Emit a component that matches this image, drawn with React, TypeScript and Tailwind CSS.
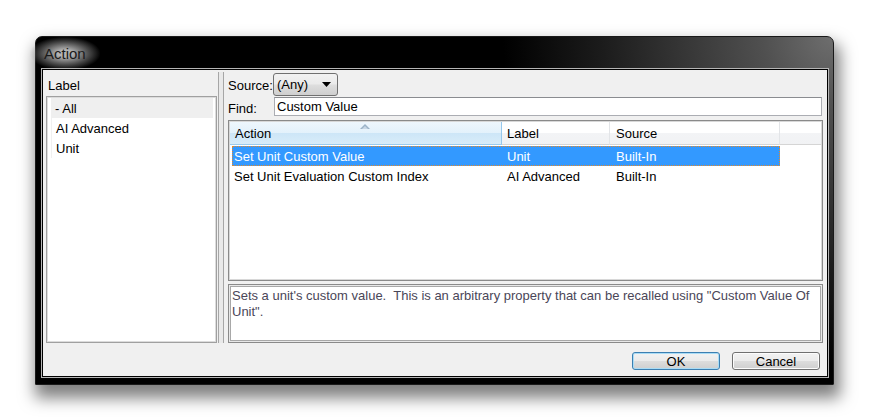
import React from "react";

const F = "font-['Liberation_Sans',Arial,sans-serif] text-[13px] leading-[15px]";

function SortArrow() {
  return (
    <svg className="absolute left-[130px] top-[2px]" width="10" height="5" viewBox="0 0 10 5">
      <polygon points="0,5 5,0 10,5" fill="#9bb3c8" />
      <polygon points="2,5 5,2 8,5" fill="#c9d8e6" />
    </svg>
  );
}

export default function App() {
  return (
    <div className={`w-[870px] h-[420px] bg-white pt-[36px] pl-[35px] ${F} text-black`}>
      <div className="w-[799px] h-[349px] flex flex-col rounded-t-[7px] border border-[#1a1a1a] bg-[radial-gradient(circle_at_100%_0%,#6e6e6e_0px,#505050_70px,#1c1c1c_230px,#000_330px)] shadow-[3px_10px_16px_3px_rgba(0,0,0,0.5)]">
        {/* title bar */}
        <div className="h-[33px] flex items-center pl-[8px]">
          <span className="px-[14px] py-[8px] -ml-[14px] text-[15px] leading-[17px] text-[#1a1a1a] bg-[radial-gradient(ellipse_at_center,rgba(200,200,200,0.9)_15%,rgba(150,150,150,0.45)_50%,rgba(0,0,0,0)_72%)]">
            Action
          </span>
        </div>
        {/* body */}
        <div className="flex-1 pl-[7px] pr-[6px] pb-[8px]">
          <div className="w-[784px] h-[306px] bg-[#f0f0f0] flex flex-col shadow-[0_0_0_1px_#000,0_0_0_2px_#b5b5b5]">
            <div className="h-[273px] flex">
              {/* left */}
              <div className="w-[175px] pl-[3px] flex flex-col">
                <div className="h-[26px] pt-[8px] pl-[2px]">Label</div>
                <div className="w-[171px] h-[247px] bg-white border border-[#a0a0a0] shadow-[inset_0_0_0_1px_#dcdcdc] pl-[4px] pr-[3px] pt-[1px]">
                  <div className="h-[20px] flex items-center pl-[4px] bg-[#efefef]">- All</div>
                  <div className="h-[20px] flex items-center pl-[4px] border-l border-[#f0f0f0]">AI Advanced</div>
                  <div className="h-[20px] flex items-center pl-[4px] border-l border-[#f0f0f0]">Unit</div>
                </div>
              </div>
              {/* splitter */}
              <div className="w-[6px] mt-[2px] border-x border-[#a6a6a6] bg-[#e9e9e9]" />
              {/* right */}
              <div className="flex-1 pl-[4px] pr-[4px] flex flex-col">
                <div className="h-[27px] flex items-start">
                  <div className="w-[45px] pt-[8px]">Source:</div>
                  <div className="mt-[3px] w-[65px] h-[23px] rounded-[3px] border border-[#707070] bg-[linear-gradient(#f2f2f2,#ebebeb_45%,#dddddd_55%,#cfcfcf)] flex items-center justify-between pl-[3px] pr-[6px]">
                    <span>(Any)</span>
                    <svg width="9" height="5" viewBox="0 0 9 5">
                      <polygon points="0,0 9,0 4.5,5" fill="#000" />
                    </svg>
                  </div>
                </div>
                <div className="h-[23px] flex items-start">
                  <div className="w-[46px] pt-[4px]">Find:</div>
                  <div className="w-[548px] h-[19px] bg-white border border-[#abadb3] border-t-[#8a8c90] flex items-center pl-[2px]">
                    Custom Value
                  </div>
                </div>
                {/* table */}
                <div className="h-[161px] border border-[#8a8a8a] shadow-[inset_0_0_0_1px_#d8d8d8] p-[1px] bg-white flex flex-col">
                  <div className="h-[23px] flex">
                    <div className="relative w-[272px] flex items-center pl-[5px] pt-[1px] bg-[linear-gradient(#eef7fd,#e3f1fb_50%,#cde6f7_51%,#d8ecf9)] border-r border-[#96c8ec] border-b border-b-[#9ccbeb]">
                      <SortArrow />
                      Action
                    </div>
                    <div className="w-[108px] flex items-center pl-[5px] pt-[1px] bg-[linear-gradient(#ffffff,#ffffff_50%,#f3f4f6_51%,#f1f2f4)] border-r border-[#e3e5e8] border-b border-b-[#d5d5d5]">
                      Label
                    </div>
                    <div className="w-[170px] flex items-center pl-[6px] pt-[1px] bg-[linear-gradient(#ffffff,#ffffff_50%,#f3f4f6_51%,#f1f2f4)] border-r border-[#e3e5e8] border-b border-b-[#d5d5d5]">
                      Source
                    </div>
                    <div className="flex-1 bg-[linear-gradient(#ffffff,#ffffff_50%,#f3f4f6_51%,#f1f2f4)] border-b border-[#d5d5d5]" />
                  </div>
                  <div className="pl-[2px] pt-[1px]">
                    <div className="w-[548px] h-[20px] flex items-center bg-[#3399ff] text-white outline outline-1 outline-dotted outline-[#e0892e] -outline-offset-1">
                      <div className="w-[270px] pl-[2px]">Set Unit Custom Value</div>
                      <div className="w-[108px] pl-[5px]">Unit</div>
                      <div className="w-[170px] pl-[6px]">Built-In</div>
                    </div>
                    <div className="w-[548px] h-[20px] flex items-center">
                      <div className="w-[270px] pl-[2px]">Set Unit Evaluation Custom Index</div>
                      <div className="w-[108px] pl-[5px]">AI Advanced</div>
                      <div className="w-[170px] pl-[6px]">Built-In</div>
                    </div>
                  </div>
                </div>
                {/* description */}
                <div className="mt-[3px] h-[59px] bg-white border border-[#8a8a8a] shadow-[inset_0_0_0_1px_#e8e8e8,inset_0_0_0_2px_#a8a8a8] pl-[3px] pt-[3px] leading-[16px] text-[#4a4658]">
                  <div className="whitespace-pre">Sets a unit's custom value.  This is an arbitrary property that can be recalled using "Custom Value Of</div>
                  <div>Unit".</div>
                </div>
              </div>
            </div>
            {/* buttons */}
            <div className="mt-[9px] h-[18px] flex justify-end gap-[12px] pr-[7px]">
              <button className="w-[88px] h-[18px] rounded-[3px] border border-[#3c7fb1] shadow-[inset_0_0_0_1px_#a9dcf6] bg-[linear-gradient(#f2f2f2,#ebebeb_50%,#dddddd_51%,#cfcfcf)] flex items-center justify-center leading-[15px]">
                OK
              </button>
              <button className="w-[88px] h-[18px] rounded-[3px] border border-[#707070] shadow-[inset_0_0_0_1px_#fcfcfc] bg-[linear-gradient(#f2f2f2,#ebebeb_50%,#dddddd_51%,#cfcfcf)] flex items-center justify-center leading-[15px]">
                Cancel
              </button>
            </div>
          </div>
        </div>
      </div>
    </div>
  );
}
